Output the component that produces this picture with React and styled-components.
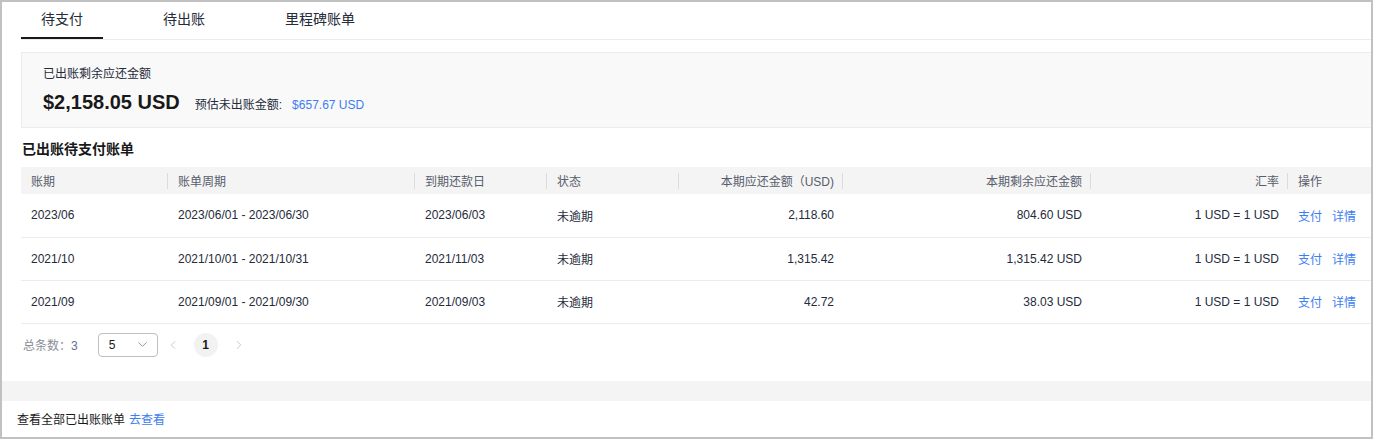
import React, { useState } from "react";
import styled, { createGlobalStyle } from "styled-components";
import { ChevronDown, ChevronLeft, ChevronRight } from "lucide-react";

const GlobalStyle = createGlobalStyle`
  html, body {
    margin: 0;
    padding: 0;
    background: #ffffff;
  }
  body {
    font-family: "Liberation Sans", "Noto Sans CJK SC", sans-serif;
    color: #222;
  }
  * {
    box-sizing: border-box;
  }
`;

const bills = [
  {
    period: "2023/06",
    cycle: "2023/06/01 - 2023/06/30",
    due: "2023/06/03",
    status: "未逾期",
    amount: "2,118.60",
    remain: "804.60 USD",
    rate: "1 USD = 1 USD",
  },
  {
    period: "2021/10",
    cycle: "2021/10/01 - 2021/10/31",
    due: "2021/11/03",
    status: "未逾期",
    amount: "1,315.42",
    remain: "1,315.42 USD",
    rate: "1 USD = 1 USD",
  },
  {
    period: "2021/09",
    cycle: "2021/09/01 - 2021/09/30",
    due: "2021/09/03",
    status: "未逾期",
    amount: "42.72",
    remain: "38.03 USD",
    rate: "1 USD = 1 USD",
  },
];

const columns = [
  { key: "period", title: "账期", width: 147 },
  { key: "cycle", title: "账单周期", width: 247 },
  { key: "due", title: "到期还款日", width: 132 },
  { key: "status", title: "状态", width: 132 },
  { key: "amount", title: "本期应还金额（USD)", width: 164, right: true },
  { key: "remain", title: "本期剩余应还金额", width: 248, right: true },
  { key: "rate", title: "汇率", width: 197, right: true },
  { key: "ops", title: "操作" },
];

const tabs = ["待支付", "待出账", "里程碑账单"];

const App = () => {
  const [activeTab, setActiveTab] = useState(0);

  return (
    <>
      <GlobalStyle />
      <Frame>
        <MainArea>
          <TabBar>
            {tabs.map((t, i) => (
              <Tab key={t} active={i === activeTab} onClick={() => setActiveTab(i)}>
                {t}
              </Tab>
            ))}
          </TabBar>

          <SummaryBox>
            <SummaryLabel>已出账剩余应还金额</SummaryLabel>
            <SummaryRow>
              <BigAmount>$2,158.05 USD</BigAmount>
              <EstimateLabel>预估未出账金额:</EstimateLabel>
              <EstimateValue>$657.67 USD</EstimateValue>
            </SummaryRow>
          </SummaryBox>

          <SectionTitle>已出账待支付账单</SectionTitle>

          <BillTable>
            <colgroup>
              {columns.map((c) => (
                <col key={c.key} style={c.width ? { width: c.width } : undefined} />
              ))}
            </colgroup>
            <thead>
              <tr>
                {columns.map((c, i) => (
                  <HeadCell key={c.key} right={c.right} divider={i < columns.length - 1}>
                    {c.title}
                  </HeadCell>
                ))}
              </tr>
            </thead>
            <tbody>
              {bills.map((b) => (
                <tr key={b.period}>
                  <BodyCell>{b.period}</BodyCell>
                  <BodyCell>{b.cycle}</BodyCell>
                  <BodyCell>{b.due}</BodyCell>
                  <BodyCell>{b.status}</BodyCell>
                  <BodyCell right>{b.amount}</BodyCell>
                  <BodyCell right>{b.remain}</BodyCell>
                  <BodyCell right>{b.rate}</BodyCell>
                  <BodyCell>
                    <Actions>
                      <LinkText>支付</LinkText>
                      <LinkText>详情</LinkText>
                    </Actions>
                  </BodyCell>
                </tr>
              ))}
            </tbody>
          </BillTable>

          <Pager>
            <TotalText>
              总条数：<TotalNum>3</TotalNum>
            </TotalText>
            <PageSizeSelect>
              <span>5</span>
              <ChevronDown size={15} strokeWidth={1.5} color="#8a8e99" />
            </PageSizeSelect>
            <PageNav>
              <PageArrow>
                <ChevronLeft size={14} strokeWidth={1.5} />
              </PageArrow>
              <PageNumber active>1</PageNumber>
              <PageArrow>
                <ChevronRight size={14} strokeWidth={1.5} />
              </PageArrow>
            </PageNav>
          </Pager>
        </MainArea>

        <GrayBand />

        <Footer>
          查看全部已出账账单 <LinkText>去查看</LinkText>
        </Footer>
      </Frame>
    </>
  );
};

const Frame = styled.div`
  width: 1373px;
  height: 439px;
  border: 2px solid #c1c1c1;
  display: flex;
  flex-direction: column;
  overflow: hidden;
  background: #fff;
`;

const MainArea = styled.div`
  padding-left: 19px;
`;

const TabBar = styled.div`
  display: flex;
  gap: 40px;
  height: 38px;
  border-bottom: 1px solid #ececec;
`;

const Tab = styled.div`
  height: 37px;
  padding: 0 20px;
  font-size: 14px;
  line-height: 35px;
  color: #252b3a;
  cursor: pointer;
  border-bottom: 2px solid ${(p) => (p.active ? "#191919" : "transparent")};
`;

const SummaryBox = styled.div`
  margin-top: 12px;
  height: 76px;
  padding: 12px 20px 0 21px;
  background: #f9f9f9;
  border: 1px solid #ececec;
  border-right: none;
`;

const SummaryLabel = styled.div`
  font-size: 12px;
  line-height: 18px;
  color: #252b3a;
`;

const SummaryRow = styled.div`
  display: flex;
  align-items: baseline;
  margin-top: 6px;
`;

const BigAmount = styled.span`
  font-size: 20px;
  font-weight: bold;
  line-height: 26px;
  color: #191919;
  margin-right: 15px;
`;

const EstimateLabel = styled.span`
  font-size: 12px;
  color: #252b3a;
  margin-right: 10px;
`;

const EstimateValue = styled.span`
  font-size: 12px;
  color: #3c7ef0;
`;

const SectionTitle = styled.div`
  margin: 11px 0 8px 1px;
  font-size: 14px;
  line-height: 20px;
  font-weight: bold;
  color: #191919;
`;

const BillTable = styled.table`
  width: 1350px;
  table-layout: fixed;
  border-collapse: collapse;
  font-size: 12px;
`;

const HeadCell = styled.th`
  position: relative;
  height: 27px;
  padding: 0 9px 0 10px;
  background: #f4f4f4;
  font-weight: normal;
  color: #575d6c;
  text-align: ${(p) => (p.right ? "right" : "left")};
  white-space: nowrap;

  &::after {
    content: "";
    display: ${(p) => (p.divider ? "block" : "none")};
    position: absolute;
    right: 0;
    top: 6px;
    width: 1px;
    height: 16px;
    background: #dcdcdc;
  }
`;

const BodyCell = styled.td`
  height: 43px;
  padding: 0 9px 0 10px;
  border-bottom: 1px solid #ececec;
  color: #252b3a;
  text-align: ${(p) => (p.right ? "right" : "left")};
  white-space: nowrap;
`;

const Actions = styled.div`
  display: flex;
  gap: 10px;
`;

const LinkText = styled.span`
  color: #3c7ef0;
  cursor: pointer;
`;

const Pager = styled.div`
  display: flex;
  align-items: center;
  height: 24px;
  margin: 9px 0 24px 2px;
  font-size: 12px;
`;

const TotalText = styled.span`
  color: #8a8e99;
  margin-right: 20px;
`;

const TotalNum = styled.span`
  color: #5e6f93;
`;

const PageSizeSelect = styled.div`
  width: 60px;
  height: 24px;
  border: 1px solid #bfbfbf;
  border-radius: 4px;
  display: flex;
  align-items: center;
  justify-content: space-between;
  padding: 0 7px 0 10px;
  font-size: 12px;
  color: #191919;
`;

const PageNav = styled.div`
  display: flex;
  align-items: center;
  gap: 9px;
  margin-left: 3px;
`;

const PageArrow = styled.div`
  width: 24px;
  height: 24px;
  display: flex;
  align-items: center;
  justify-content: center;
  color: #c2c2c2;
`;

const PageNumber = styled.div`
  width: 24px;
  height: 24px;
  border-radius: 50%;
  display: flex;
  align-items: center;
  justify-content: center;
  background: ${(p) => (p.active ? "#f2f2f2" : "transparent")};
  font-weight: ${(p) => (p.active ? "bold" : "normal")};
  color: #191919;
`;

const GrayBand = styled.div`
  height: 20px;
  background: #f4f4f4;
`;

const Footer = styled.div`
  flex: 1;
  display: flex;
  align-items: center;
  gap: 4px;
  padding-left: 15px;
  font-size: 12px;
  color: #191919;
`;

export default App;
